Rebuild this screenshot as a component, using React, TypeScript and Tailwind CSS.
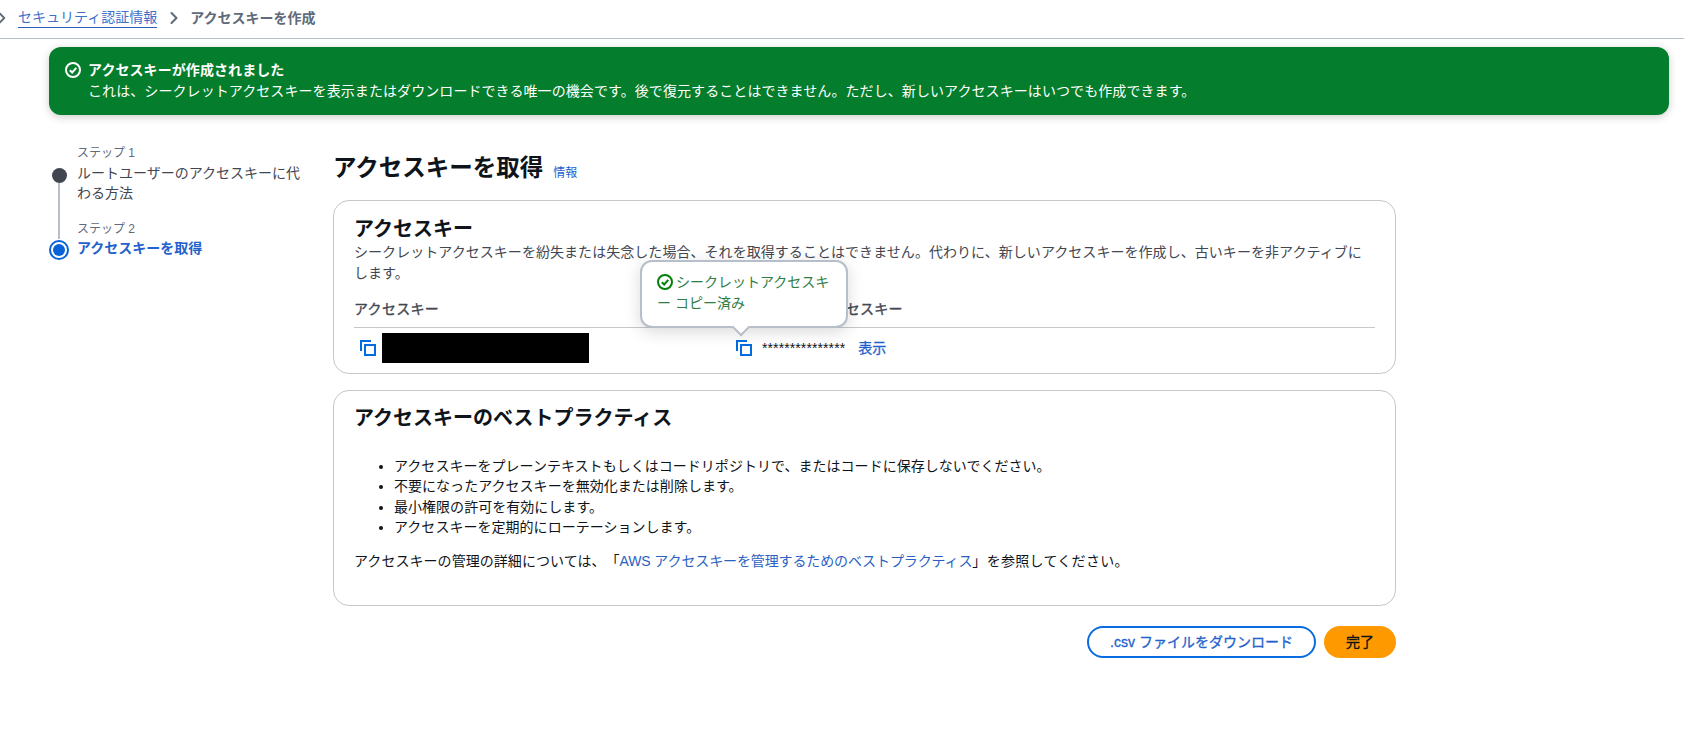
import { ChevronRight } from "lucide-react";

function CheckCircle({ className }: { className: string }) {
	return (
		<svg viewBox="0 0 16 16" fill="none" stroke="currentColor" strokeWidth="2" className={className}>
			<circle cx="8" cy="8" r="7" />
			<path d="M4.8 8.2 7.2 10.5 11.3 5.8" />
		</svg>
	);
}

function CopyIcon() {
	return (
		<svg viewBox="0 0 16 16" fill="none" stroke="#006ce0" strokeWidth="2" className="h-4 w-4 shrink-0">
			<path d="M1 11V1h10" />
			<rect x="5" y="5" width="10" height="10" />
		</svg>
	);
}

const practices = [
	"アクセスキーをプレーンテキストもしくはコードリポジトリで、またはコードに保存しないでください。",
	"不要になったアクセスキーを無効化または削除します。",
	"最小権限の許可を有効にします。",
	"アクセスキーを定期的にローテーションします。",
];

export default function App() {
	return (
		<div className="h-[739px] overflow-hidden bg-white text-sm leading-5 text-[#0f141a] [font-family:'Liberation_Sans','Noto_Sans_CJK_JP',sans-serif]">
			<nav className="flex h-[39px] items-center border-b border-[#b6bec9] pb-[3px] text-[#5f6b7a]">
				<ChevronRight className="ml-[-7px] h-[18px] w-[18px] shrink-0" strokeWidth={2.5} />
				<a className="ml-[7px] border-b border-[#2a5fc4] text-[#3f6fc9]">セキュリティ認証情報</a>
				<ChevronRight className="ml-[7px] mr-[6px] h-[20px] w-[20px] shrink-0" strokeWidth={2.5} />
				<span className="font-bold">アクセスキーを作成</span>
			</nav>

			<div className="mx-[49px] mr-[15px] mt-2 flex h-[68px] rounded-[12px] bg-[#047d2c] px-[16px] py-[13px] text-white shadow-[0_2px_8px_rgba(0,0,0,0.2)]">
				<CheckCircle className="mr-[7px] mt-[2px] h-4 w-4 shrink-0" />
				<div className="leading-[21px] tracking-[0.08px]">
					<div className="font-bold">アクセスキーが作成されました</div>
					<div>これは、シークレットアクセスキーを表示またはダウンロードできる唯一の機会です。後で復元することはできません。ただし、新しいアクセスキーはいつでも作成できます。</div>
				</div>
			</div>

			<div className="mt-[29px] flex pl-[49px]">
				<ol className="w-[284px] shrink-0 pr-[30px]">
					<li className="flex">
						<div className="mr-[8px] flex w-[20px] shrink-0 flex-col items-center pt-[24px]">
							<div className="h-[15px] w-[15px] rounded-full bg-[#424650]" />
							<div className="h-[56px] w-[2px] bg-[#b6bec9]" />
						</div>
						<div>
							<div className="text-xs leading-[18px] text-[#5f6b7a]">ステップ 1</div>
							<div className="mt-[1px] text-[#424650]">ルートユーザーのアクセスキーに代わる方法</div>
						</div>
					</li>
					<li className="mt-[-19px] flex">
						<div className="mr-[8px] flex w-[20px] shrink-0 flex-col items-center pt-[20px]">
							<div className="flex h-[20px] w-[20px] items-center justify-center rounded-full border-[2px] border-[#0a62d6]">
								<div className="h-[12px] w-[12px] rounded-full bg-[#0a62d6]" />
							</div>
						</div>
						<div>
							<div className="text-xs leading-[18px] text-[#5f6b7a]">ステップ 2</div>
							<div className="font-bold text-[#1f62cc]">アクセスキーを取得</div>
						</div>
					</li>
				</ol>

				<main className="w-[1063px] shrink-0">
					<div className="flex h-[48px] items-center pb-[1px]">
						<h1 className="text-[23.5px] leading-8 font-bold">アクセスキーを取得</h1>
						<a className="ml-[10px] mt-[10px] text-xs text-[#1f62cc]">情報</a>
					</div>

					<section className="relative mt-[8px] h-[174px] rounded-[16px] border border-[#c6c6cd] px-[20px] pt-[15px]">
						<h2 className="text-xl leading-[26px] font-bold">アクセスキー</h2>
						<p className="pr-[6px] leading-[21px] tracking-[0.05px] text-[#424650]">
							シークレットアクセスキーを紛失または失念した場合、それを取得することはできません。代わりに、新しいアクセスキーを作成し、古いキーを非アクティブにします。
						</p>
						<div className="mt-[15px] grid grid-cols-[378px_1fr] border-b border-[#c6c6cd] pb-[8px] leading-5 tracking-[0.3px] text-[#424650] [-webkit-text-stroke:0.35px_#424650]">
							<div>アクセスキー</div>
							<div>シークレットアクセスキー</div>
						</div>
						<div className="grid grid-cols-[378px_1fr] pt-[5px]">
							<div className="flex items-center pl-[6px]">
								<CopyIcon />
								<div className="ml-[6px] h-[30px] w-[207px] bg-black" />
							</div>
							<div className="flex items-center pl-[4px]">
								<CopyIcon />
								<span className="ml-[10px] text-sm tracking-[0.1px]">***************</span>
								<a className="ml-[13px] text-sm text-[#1f62cc] [-webkit-text-stroke:0.3px_#1f62cc]">表示</a>
							</div>
						</div>

						<div className="absolute left-[306px] top-[59px] h-[68px] w-[208px] rounded-[12px] border-2 border-[#b6bec9] bg-white py-[10px] pl-[15px] pr-[8px] leading-[21px] text-[#2f7d45] [line-break:anywhere] shadow-[0_4px_16px_rgba(0,0,0,0.15)]">
							<CheckCircle className="mr-[3px] inline-block h-4 w-4 align-[-3px] text-[#037f0c]" />
							シークレットアクセスキー コピー済み
							<div className="absolute bottom-[-8px] left-[93px] h-[12px] w-[12px] rotate-45 border-r-2 border-b-2 border-[#b6bec9] bg-white" />
						</div>
					</section>

					<section className="mt-[16px] h-[216px] rounded-[16px] border border-[#c6c6cd] px-[20px] pt-[14px]">
						<h2 className="text-xl leading-[26px] font-bold">アクセスキーのベストプラクティス</h2>
						<ul className="mt-[25px] list-disc pl-[40px] leading-[20.3px] tracking-[0.03px]">
							{practices.map((text) => (
								<li key={text}>{text}</li>
							))}
						</ul>
						<p className="mt-[14px] tracking-[0.05px] [text-spacing-trim:space-all]">
							アクセスキーの管理の詳細については、「<a className="tracking-[-0.12px] text-[#2a5fc4]">AWS アクセスキーを管理するためのベストプラクティス</a><span className="tracking-[0.3px]">」を参照してください。</span>
						</p>
					</section>

					<div className="mt-[20px] flex justify-end gap-[8px]">
						<button className="h-[32px] w-[229px] rounded-full border-2 border-[#0a6ce0] text-sm text-[#1f62cc] [-webkit-text-stroke:0.3px_#1f62cc]">
							.csv ファイルをダウンロード
						</button>
						<button className="h-[32px] w-[72px] rounded-full bg-[#ff9900] text-sm text-[#0f141a] [-webkit-text-stroke:0.3px_#0f141a]">
							完了
						</button>
					</div>
				</main>
			</div>
		</div>
	);
}
